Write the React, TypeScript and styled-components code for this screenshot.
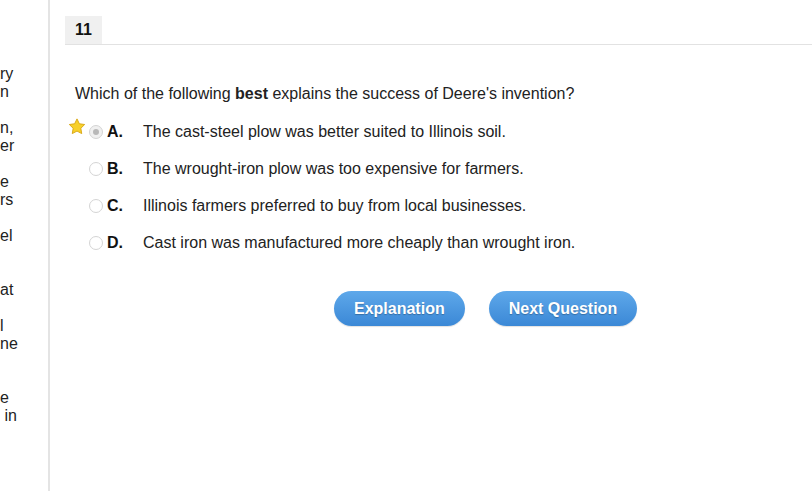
import React from 'react'
import styled, { createGlobalStyle } from 'styled-components'

const GlobalStyle = createGlobalStyle`
  html, body {
    margin: 0;
    padding: 0;
    background: #fff;
    font-family: Arial, "Liberation Sans", sans-serif;
    color: #222;
  }
`

const Page = styled.div`
  display: flex;
  width: 812px;
  height: 491px;
  overflow: hidden;
`

const Sidebar = styled.aside`
  width: 48px;
  flex-shrink: 0;
  overflow: hidden;
  padding-top: 65px;
  font-size: 16px;
  line-height: 18px;
  color: #222;
  border-right: 2px solid #e4e4e4;
  white-space: pre;
`

const SideLine = styled.div`
  height: 18px;
`

const Main = styled.main`
  flex: 1;
  padding: 16px 0 0 15px;
`

const Header = styled.div`
  display: flex;
  border-bottom: 1px solid #e2e2e2;
`

const Tab = styled.div`
  background: #f0f0f0;
  height: 28px;
  padding: 0 10px;
  display: flex;
  align-items: center;
  font-weight: bold;
  font-size: 16px;
  color: #111;
`

const Body = styled.div`
  padding: 40px 0 0 10px;
`

const Question = styled.p`
  margin: 0 0 20px;
  font-size: 16px;
  line-height: 18px;
  color: #222;
`

const Options = styled.div`
  display: flex;
  flex-direction: column;
  gap: 19px;
`

const Row = styled.label`
  display: flex;
  align-items: center;
  height: 18px;
  font-size: 16px;
  color: #222;
  margin-left: -8px;
`

const StarSlot = styled.span`
  width: 22px;
  height: 18px;
  display: flex;
  align-items: flex-start;
  justify-content: flex-start;
  svg {
    margin-top: -5px;
    margin-left: 1px;
  }
`

const Radio = styled.span<{ $checked?: boolean }>`
  width: 12px;
  height: 12px;
  border-radius: 50%;
  border: 1px solid #d4d4d4;
  background: ${p => (p.$checked ? '#f0f0f0' : '#fff')};
  display: flex;
  align-items: center;
  justify-content: center;
  margin-right: 4px;
  &::after {
    content: '';
    width: 6px;
    height: 6px;
    border-radius: 50%;
    background: ${p => (p.$checked ? '#b8b8b8' : 'transparent')};
  }
`

const Letter = styled.span`
  font-weight: bold;
  width: 36px;
  color: #111;
`

const Buttons = styled.div`
  display: flex;
  gap: 24px;
  padding: 39px 0 0 259px;
`

const Button = styled.button`
  height: 35px;
  padding: 0 20px;
  border: none;
  border-radius: 18px;
  background: linear-gradient(#5ea8ea, #3b88d6);
  color: #fff;
  font-family: Arial, "Liberation Sans", sans-serif;
  font-weight: bold;
  font-size: 16px;
  text-shadow: 0 1px 1px rgba(0, 0, 0, 0.25);
  box-shadow: 0 1px 1px rgba(0, 0, 0, 0.12);
  cursor: pointer;
`

const Star = () => (
  <svg width="18" height="17" viewBox="0 0 24 23">
    <path
      d="M12 1.2l3.2 6.6 7.2 1-5.2 5.1 1.2 7.2L12 17.7l-6.4 3.4 1.2-7.2L1.6 8.8l7.2-1z"
      fill="#f7d02a"
      stroke="#d6a40e"
      strokeWidth="1.2"
      strokeLinejoin="round"
    />
  </svg>
)

const sideLines = [
  'ry', 'n', '', 'n,', 'er', '', 'e', 'rs', '', 'el', '', '', 'at', '',
  'l', 'ne', '', '', 'e', ' in',
]

const options = [
  { letter: 'A.', text: 'The cast-steel plow was better suited to Illinois soil.', starred: true, checked: true },
  { letter: 'B.', text: 'The wrought-iron plow was too expensive for farmers.' },
  { letter: 'C.', text: 'Illinois farmers preferred to buy from local businesses.' },
  { letter: 'D.', text: 'Cast iron was manufactured more cheaply than wrought iron.' },
]

export default function App() {
  return (
    <>
      <GlobalStyle />
      <Page>
        <Sidebar>
          {sideLines.map((l, i) => (
            <SideLine key={i}>{l || '\u00a0'}</SideLine>
          ))}
        </Sidebar>
        <Main>
          <Header>
            <Tab>11</Tab>
          </Header>
          <Body>
            <Question>
              Which of the following <b>best</b> explains the success of Deere's invention?
            </Question>
            <Options>
              {options.map(o => (
                <Row key={o.letter}>
                  <StarSlot>{o.starred && <Star />}</StarSlot>
                  <Radio $checked={o.checked} />
                  <Letter>{o.letter}</Letter>
                  <span>{o.text}</span>
                </Row>
              ))}
            </Options>
            <Buttons>
              <Button>Explanation</Button>
              <Button>Next Question</Button>
            </Buttons>
          </Body>
        </Main>
      </Page>
    </>
  )
}
